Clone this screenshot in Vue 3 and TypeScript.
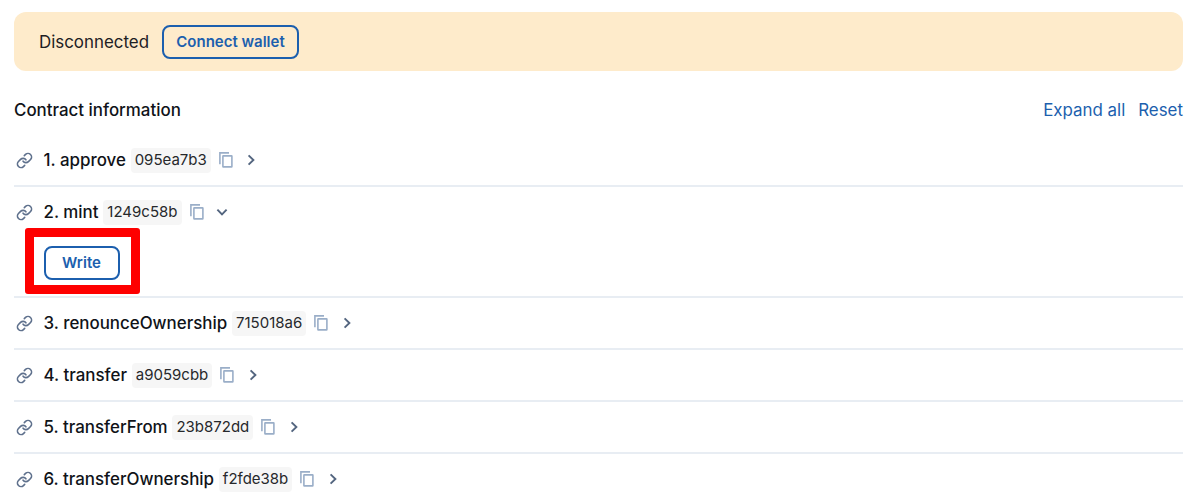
<script setup lang="ts">
import { ref } from 'vue';

interface ContractMethod {
  name: string;
  selector: string;
}

const methods: ContractMethod[] = [
  { name: 'approve', selector: '095ea7b3' },
  { name: 'mint', selector: '1249c58b' },
  { name: 'renounceOwnership', selector: '715018a6' },
  { name: 'transfer', selector: 'a9059cbb' },
  { name: 'transferFrom', selector: '23b872dd' },
  { name: 'transferOwnership', selector: 'f2fde38b' },
];

const expanded = ref<string[]>(['mint']);

function toggle(name: string) {
  expanded.value = expanded.value.includes(name)
    ? expanded.value.filter((item) => item !== name)
    : [...expanded.value, name];
}

function expandAll() {
  expanded.value = methods.map((method) => method.name);
}

function reset() {
  expanded.value = [];
}

function copy(selector: string) {
  navigator.clipboard?.writeText(selector);
}
</script>

<template>
  <main class="page">
    <div class="alert">
      <span class="status">Disconnected</span>
      <button type="button" class="outline connect">Connect wallet</button>
    </div>

    <header class="heading">
      <h2>Contract information</h2>
      <div class="links">
        <button type="button" class="link" @click="expandAll">Expand all</button>
        <button type="button" class="link" @click="reset">Reset</button>
      </div>
    </header>

    <section v-for="(method, index) in methods" :key="method.selector" class="method">
      <div class="row" @click="toggle(method.name)">
        <svg class="chain" viewBox="0 0 24 24" aria-hidden="true">
          <path d="M10 13a5 5 0 0 0 7.54.54l3-3a5 5 0 0 0-7.07-7.07l-1.72 1.71" />
          <path d="M14 11a5 5 0 0 0-7.54-.54l-3 3a5 5 0 0 0 7.07 7.07l1.71-1.71" />
        </svg>
        <span class="name">{{ index + 1 }}. {{ method.name }}</span>
        <code class="selector">{{ method.selector }}</code>
        <button
          type="button"
          class="copy"
          aria-label="Copy selector"
          @click.stop="copy(method.selector)"
        >
          <svg viewBox="0 0 14 16" aria-hidden="true">
            <path d="M0.9 12.2V0.9H10" />
            <rect x="3.9" y="3.9" width="9" height="11" rx="0.4" />
          </svg>
        </button>
        <svg
          class="chevron"
          :class="{ open: expanded.includes(method.name) }"
          viewBox="0 0 12 12"
          aria-hidden="true"
        >
          <path d="M3.6 1.4 8.4 6 3.6 10.6" />
        </svg>
      </div>
      <div v-if="expanded.includes(method.name)" class="body">
        <div class="highlight">
          <button type="button" class="outline write">Write</button>
        </div>
      </div>
    </section>
  </main>
</template>

<style>
body {
  background: #fff;
  overflow: hidden;
}
</style>

<style scoped>
.page {
  box-sizing: border-box;
  height: 503px;
  padding: 12px 17px 0 14px;
  overflow: hidden;
  font-family: Inter, 'Liberation Sans', sans-serif;
  font-size: 16.9px;
  color: #101318;
}

button {
  margin: 0;
  padding: 0;
  border: 0;
  background: none;
  font: inherit;
  color: inherit;
  cursor: pointer;
}

.alert {
  display: flex;
  align-items: center;
  gap: 13px;
  height: 59px;
  box-sizing: border-box;
  padding-left: 25px;
  border-radius: 12px;
  background: #feebcb;
}

.status {
  color: #1d2024;
}

.outline {
  box-sizing: border-box;
  height: 34px;
  border: 2px solid #1c5fae;
  border-radius: 8px;
  color: #1c5fae;
  font-size: 15px;
  font-weight: 600;
}

.connect {
  width: 137px;
}

.heading {
  display: flex;
  align-items: center;
  justify-content: space-between;
  box-sizing: border-box;
  height: 64px;
  padding-top: 14px;
}

h2 {
  margin: 0;
  font-size: inherit;
  font-weight: 500;
}

.links {
  display: flex;
  gap: 13px;
}

.link {
  color: #1c5fae;
}

.method {
  border-bottom: 2px solid #e8edf3;
}

.row {
  display: flex;
  align-items: center;
  height: 50px;
  cursor: pointer;
}

.chain {
  width: 17px;
  height: 17px;
  margin: 0 10.5px 0 2px;
  fill: none;
  stroke: #5f718d;
  stroke-width: 2.3;
  stroke-linecap: round;
  stroke-linejoin: round;
}

.name {
  font-weight: 500;
}

.selector {
  height: 25px;
  margin-left: 4.8px;
  padding: 0 4px;
  border-radius: 4px;
  background: #f6f6f6;
  font-family: inherit;
  font-size: 15px;
  line-height: 24px;
  color: #26282b;
}

.copy {
  display: flex;
  margin-left: 8px;
}

.copy svg {
  width: 14px;
  height: 16px;
  fill: none;
  stroke: #9aaec8;
  stroke-width: 1.6;
}

.chevron {
  width: 12px;
  height: 12px;
  margin-left: 12.3px;
  fill: none;
  stroke: #53657f;
  stroke-width: 1.9;
}

.chevron.open {
  transform: rotate(90deg);
}

.body {
  height: 59px;
}

.highlight {
  display: flex;
  align-items: center;
  justify-content: center;
  box-sizing: border-box;
  width: 115px;
  height: 66px;
  margin-left: 11px;
  padding: 3px 2px 0 0;
  border: 9px solid #fe0000;
  border-radius: 3px;
  position: relative;
  top: -9px;
}

.write {
  width: 76px;
}
</style>
